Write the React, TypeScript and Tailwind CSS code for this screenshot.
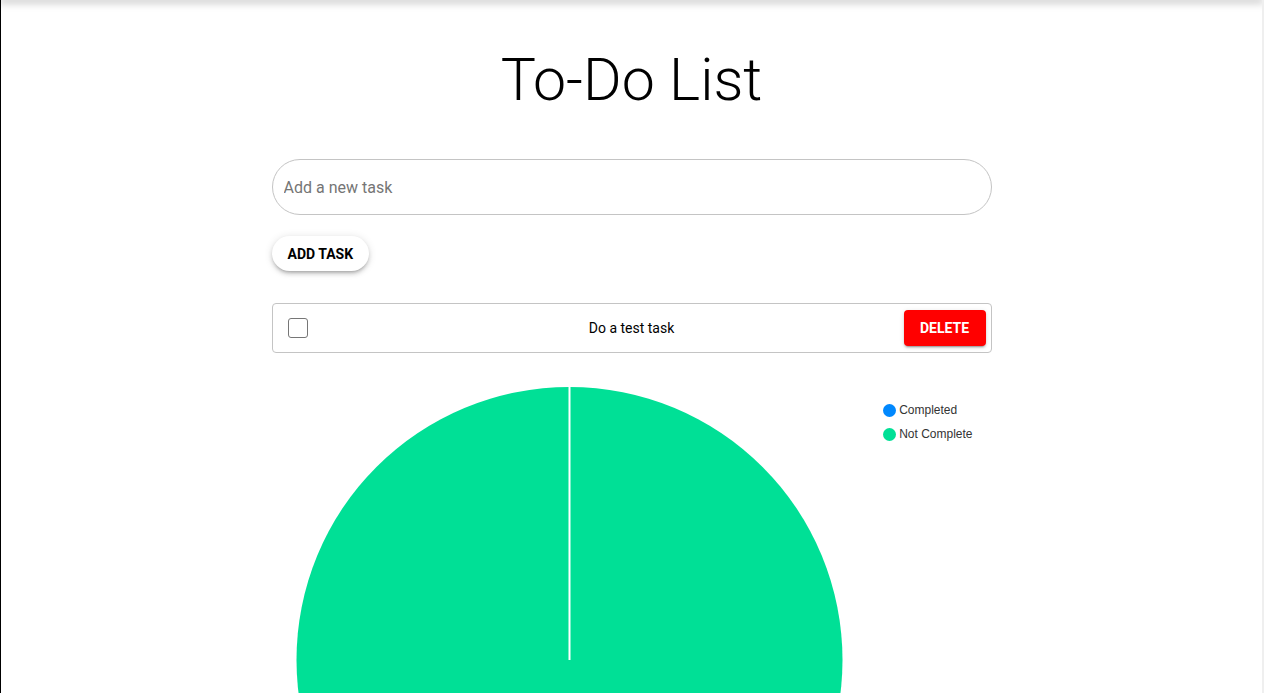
import { useState } from 'react';

type Task = { id: number; text: string; done: boolean };

export default function App() {
  const [text, setText] = useState('');
  const [tasks, setTasks] = useState<Task[]>([{ id: 1, text: 'Do a test task', done: false }]);

  function addTask() {
    if (!text.trim()) return;
    setTasks([...tasks, { id: Date.now(), text, done: false }]);
    setText('');
  }

  const completed = tasks.filter(t => t.done).length;

  return (
    <div className="min-h-screen bg-white border-l border-black border-r-2 border-r-[#efefef] overflow-hidden font-['Roboto',sans-serif]">
      {/* app bar shadow */}
      <div className="h-0 w-full shadow-[0_0_9px_2px_rgba(0,0,0,0.35)]"></div>

      <div className="w-[720px] mx-auto">
        <h1 className="mt-[44px] text-center text-[59px] font-light leading-[72px] text-black">To-Do List</h1>

        <input
          value={text}
          onChange={e => setText(e.target.value)}
          placeholder="Add a new task"
          className="mt-[43px] block w-full h-[56px] rounded-full border border-[#c4c4c4] px-[11px] text-base text-black placeholder-[#757575] outline-none"
        />

        <button
          onClick={addTask}
          className="mt-[21px] h-[35px] px-4 rounded-full bg-white text-sm font-bold text-black shadow-[0_3px_3px_-2px_rgba(0,0,0,0.2),0_3px_4px_0_rgba(0,0,0,0.14),0_1px_8px_0_rgba(0,0,0,0.12)]"
        >
          ADD TASK
        </button>

        <div className="mt-[32px] flex flex-col gap-2">
          {tasks.map(t => (
            <div
              key={t.id}
              className="h-[50px] grid grid-cols-[1fr_auto_1fr] items-center border border-[#c4c4c4] rounded px-[5px]"
            >
              <div>
                <input
                  type="checkbox"
                  checked={t.done}
                  onChange={() => setTasks(tasks.map(x => (x.id === t.id ? { ...x, done: !x.done } : x)))}
                  className="appearance-none block ml-[10px] w-5 h-5 border border-[#767676] rounded-[3px] checked:bg-[#0088fe]"
                />
              </div>
              <span className="text-sm text-black">{t.text}</span>
              <div className="flex justify-end">
                <button
                  onClick={() => setTasks(tasks.filter(x => x.id !== t.id))}
                  className="h-9 w-[82px] rounded bg-[#ff0000] text-sm font-bold text-white shadow-[0_3px_1px_-2px_rgba(0,0,0,0.2),0_2px_2px_0_rgba(0,0,0,0.14),0_1px_5px_0_rgba(0,0,0,0.12)]"
                >
                  DELETE
                </button>
              </div>
            </div>
          ))}
        </div>

        {/* pie chart */}
        <div className="relative h-[600px]">
          <svg width="720" height="600" className="block">
            {completed === 0 || completed === tasks.length ? (
              <circle cx="297.5" cy="307" r="273" fill={completed === 0 ? '#00e096' : '#0088fe'} />
            ) : null}
            <line x1="297.5" y1="34" x2="297.5" y2="307" stroke="#ffffff" strokeWidth="2" />
          </svg>
          <ul className="absolute top-[49px] right-[19px] flex flex-col gap-[8px] font-['Liberation_Sans',Arial,sans-serif] text-xs text-[#333]">
            <li className="flex items-center gap-[3px] h-4">
              <span className="w-[13px] h-[13px] rounded-full bg-[#0088fe]"></span>
              Completed
            </li>
            <li className="flex items-center gap-[3px] h-4">
              <span className="w-[13px] h-[13px] rounded-full bg-[#00e096]"></span>
              Not Complete
            </li>
          </ul>
        </div>
      </div>
    </div>
  );
}
